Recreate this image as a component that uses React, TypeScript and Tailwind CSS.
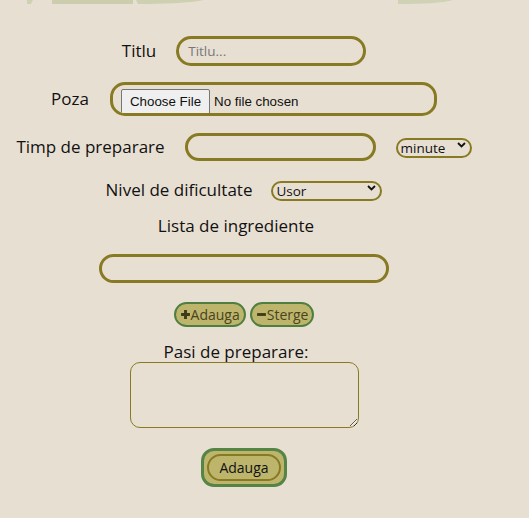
import React from "react";

function Plus() {
  return (
    <svg width="11" height="11" viewBox="0 0 10 10" className="shrink-0">
      <path d="M5 1v8M1 5h8" stroke="#3f3a17" strokeWidth="2.6" />
    </svg>
  );
}

function Minus() {
  return (
    <svg width="11" height="11" viewBox="0 0 10 10" className="shrink-0">
      <path d="M1 5h8" stroke="#3f3a17" strokeWidth="2.6" />
    </svg>
  );
}

function Select({ width, options }: { width: string; options: string[] }) {
  return (
    <div className={`relative ${width}`}>
      <select className="appearance-none w-full h-[20px] border-2 border-[#877a22] rounded-full bg-transparent text-[13.5px] leading-[16px] pl-[3px] pr-4 outline-none">
        {options.map((o) => (
          <option key={o}>{o}</option>
        ))}
      </select>
      <svg
        width="9"
        height="6"
        viewBox="0 0 9 6"
        className="absolute right-[6px] top-[7px] pointer-events-none"
      >
        <path d="M1 1l3.5 3.5L8 1" fill="none" stroke="#111" strokeWidth="1.8" />
      </svg>
    </div>
  );
}

export default function App() {
  return (
    <div className="min-h-screen bg-[#e8dfd3] font-['Open_Sans',sans-serif] text-[#111]">
      {/* bottom edge of the header picture */}
      <svg width="529" height="5" className="block">
        <path d="M27 0h6l-2 4h-4z" fill="#cfd1b3" />
        <path d="M52 0h81v4h-81z" fill="#cbcdae" />
        <path d="M136 0h68c-14 3-40 4-66 4z" fill="#cdd0b1" />
        <path d="M398 0h55c-10 3-30 4-55 4z" fill="#cfd2b4" />
      </svg>

      <form className="w-[488px] flex flex-col items-center pt-[31px]">
        <div className="flex items-center gap-5 h-[30px]">
          <label className="text-[17px] leading-[20px]">Titlu</label>
          <input
            type="text"
            placeholder="Titlu..."
            className="w-[190px] h-[30px] border-[3px] border-[#877a22] rounded-full bg-transparent px-[9px] text-[13.5px] placeholder:text-[#777] outline-none"
          />
        </div>

        <div className="flex items-center gap-[21px] mt-4 h-[34px]">
          <label className="text-[17px] leading-[20px]">Poza</label>
          <input
            type="file"
            className="w-[327px] h-[34px] border-[3px] border-[#877a22] rounded-[15px] pl-[8px] pt-[4px] font-['Liberation_Sans',sans-serif] text-[13.33px] file:border file:border-[#767676] file:bg-[#efefef] file:rounded-[2px] file:px-[8px] file:py-[2px] file:mr-[4px] file:text-[13.33px]"
          />
        </div>

        <div className="flex items-center gap-5 mt-[17px] h-[28px]">
          <label className="text-[17px] leading-[20px]">Timp de preparare</label>
          <input
            type="text"
            className="w-[191px] h-[28px] border-[3px] border-[#877a22] rounded-full bg-transparent outline-none"
          />
          <Select width="w-[76px]" options={["minute", "ore"]} />
        </div>

        <div className="flex items-center gap-[19px] mt-[19px] h-[20px]">
          <label className="text-[17px] leading-[20px]">Nivel de dificultate</label>
          <Select width="w-[111px]" options={["Usor", "Mediu", "Greu"]} />
        </div>

        <label className="text-[17px] leading-[20px] mt-[16px] pr-4">Lista de ingrediente</label>

        <input
          type="text"
          className="w-[290px] h-[29px] border-[3px] border-[#877a22] rounded-full bg-transparent mt-[18px] outline-none"
        />

        <div className="flex items-center gap-[4px] mt-[19px]">
          <button
            type="button"
            className="flex items-center h-[25px] px-[4px] border-2 border-[#4f7f40] rounded-full bg-[#bdb56c] text-[14px] text-[#4a431c]"
          >
            <Plus />
            Adauga
          </button>
          <button
            type="button"
            className="flex items-center h-[25px] px-[4px] border-2 border-[#4f7f40] rounded-full bg-[#bdb56c] text-[14px] text-[#4a431c]"
          >
            <Minus />
            Sterge
          </button>
        </div>

        <label className="text-[17px] leading-[20px] mt-[15px] pr-4">Pasi de preparare:</label>

        <textarea className="block w-[229px] h-[66px] border border-[#877a22] rounded-[10px] bg-transparent outline-none" />

        <button
          type="submit"
          className="mt-[20px] w-[86px] h-[39px] p-[3px] border-[3px] border-[#568444] rounded-[13px] bg-[#bdb56c]"
        >
          <span className="flex items-center justify-center h-full border-2 border-[#877a22] rounded-full text-[14px] text-[#111]">
            Adauga
          </span>
        </button>
      </form>
    </div>
  );
}
